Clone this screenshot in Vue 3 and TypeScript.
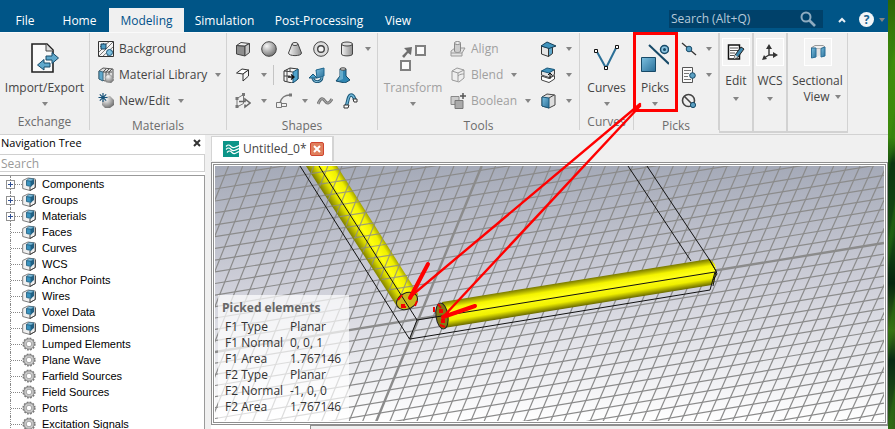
<script setup lang="ts">
import { ref } from 'vue'

interface MenuTab { label: string; active?: boolean }
interface TreeNode { label: string; icon: string; branch?: boolean }
interface GridLine { x1: number; y1: number; x2: number; y2: number; axis: boolean }

const tabs: MenuTab[] = [
  { label: 'File' },
  { label: 'Home' },
  { label: 'Modeling', active: true },
  { label: 'Simulation' },
  { label: 'Post-Processing' },
  { label: 'View' },
]

const folder = (label: string, branch = false): TreeNode => ({ label, icon: 'folder', branch })
const gear = (label: string): TreeNode => ({ label, icon: 'gear' })

const tree: TreeNode[] = [
  folder('Components', true),
  folder('Groups', true),
  folder('Materials', true),
  folder('Faces'),
  folder('Curves'),
  folder('WCS'),
  folder('Anchor Points'),
  folder('Wires'),
  folder('Voxel Data'),
  folder('Dimensions'),
  gear('Lumped Elements'),
  gear('Plane Wave'),
  gear('Farfield Sources'),
  gear('Field Sources'),
  gear('Ports'),
  gear('Excitation Signals'),
]

const picked: [string, string][] = [
  ['F1 Type', 'Planar'],
  ['F1 Normal', '0, 0, 1'],
  ['F1 Area', '1.767146'],
  ['F2 Type', 'Planar'],
  ['F2 Normal', '-1, 0, 0'],
  ['F2 Area', '1.767146'],
]

const command = ref('')
const filter = ref('')

// Ground plane seen in perspective: spacing shrinks slightly away from the axes.
const lines: GridLine[] = []
for (let n = -18; n <= 18; n++) {
  const bend = 0.028 * n * n
  lines.push({ x1: 215, y1: 352 + 11.25 * n - bend, x2: 884, y2: 243 + 11.1 * n - bend, axis: n === 0 })
}
for (let n = -22; n <= 42; n++) {
  lines.push({
    x1: 481.7 + 13.85 * n - 0.012 * n * n,
    y1: 166,
    x2: 376 + 13.6 * n - 0.015 * n * n,
    y2: 422,
    axis: n === 0,
  })
}
</script>

<template>
  <svg class="defs" aria-hidden="true">
    <defs>
      <linearGradient id="gBlue" x1="0" y1="0" x2="1" y2="1"><stop offset="0" stop-color="#7cc0e0" /><stop offset="1" stop-color="#2a6f98" /></linearGradient>
      <linearGradient id="gGrey" x1="0" y1="0" x2="1" y2="0"><stop offset="0" stop-color="#f4f4f4" /><stop offset="1" stop-color="#8d8d8d" /></linearGradient>
      <radialGradient id="gBall" cx=".35" cy=".3" r=".75"><stop offset="0" stop-color="#f6f6f6" /><stop offset="1" stop-color="#6f6f6f" /></radialGradient>
    </defs>
    <symbol id="caret" viewBox="0 0 6 4"><path d="M0 0h6L3 4z" fill="#858585" /></symbol>
    <symbol id="exchange" viewBox="0 0 28 30">
      <path d="M1 1h15l6 6v22H1z" fill="#fafafa" stroke="#222" stroke-width="1.6" /><path d="M15 1v7h7" fill="#ddd" stroke="#444" />
      <path d="M15 13h6v-3.500l6.500 5.500-6.500 5.500V17h-6z" fill="#5fa8cc" stroke="#174a68" />
      <path d="M19 20h-6v-3.500L6.500 22l6.500 5v-3h6z" fill="#5fa8cc" stroke="#174a68" />
    </symbol>
    <symbol id="background" viewBox="0 0 16 16">
      <path d="M.5.5h15v15H.5z" fill="#f4f4f4" stroke="#333" /><path d="M1 15 15 1M1 11 7 5M5 15 15 6M9 15l6-5M2 6l4-4M8 3l3-2" stroke="#777" />
      <path d="M3 3h5v5H3z" fill="#4d9cc4" stroke="#173f5a" /><circle cx="11.500" cy="11.500" r="3" fill="#7cc0e0" stroke="#1c5678" />
    </symbol>
    <symbol id="library" viewBox="0 0 16 16">
      <path d="M1 4 5 1l10 1v9l-8 3-6-2z" fill="#ddd" stroke="#555" /><path d="M1 4l4 1v9l-4-2z" fill="#5fa8cc" stroke="#3c6a82" /><path d="M5 5l3-3M8 13V5l3-3M11 12V5l3-3M5 5h9" fill="none" stroke="#555" />
      <path d="M7 10l3-3 4 2 2 4-3 3-5-1z" fill="url(#gBall)" stroke="#888" stroke-width=".5" />
    </symbol>
    <symbol id="newedit" viewBox="0 0 16 16">
      <path d="M4 8l3-4 5-1 4 4v5l-4 3H7l-3-3z" fill="url(#gBall)" /><path d="M5 0v9M.5 4.500h9M1.800 1.300l6.400 6.400M8.200 1.300 1.800 7.700" stroke="#16527a" stroke-width="1.200" />
    </symbol>
    <symbol id="box" viewBox="0 0 16 16"><path d="M1.500 4.500 10 5v10l-8.500-2z" fill="#8e8e8e" stroke="#444" /><path d="M1.500 4.500 6 1.500l8.500 1L10 5z" fill="#eee" stroke="#444" /><path d="M10 5l4.500-2.500v9L10 15z" fill="#c4c4c4" stroke="#444" /></symbol>
    <symbol id="ball" viewBox="0 0 16 16"><circle cx="8" cy="8" r="7.300" fill="url(#gBall)" stroke="#444" /></symbol>
    <symbol id="cone" viewBox="0 0 16 16"><path d="M5 3 1.500 12c0 3.500 13 3.500 13 0L11 3z" fill="url(#gGrey)" stroke="#444" /><ellipse cx="8" cy="3" rx="3" ry="1.500" fill="#eee" stroke="#444" /></symbol>
    <symbol id="torus" viewBox="0 0 16 16"><circle cx="8" cy="8" r="7.300" fill="#ddd" stroke="#444" /><circle cx="8" cy="8" r="3.300" fill="#f4f4f4" stroke="#444" stroke-width="1.400" /></symbol>
    <symbol id="cylinder" viewBox="0 0 16 16"><path d="M2.500 3v10c0 2.500 11 2.500 11 0V3z" fill="url(#gGrey)" stroke="#444" /><ellipse cx="8" cy="3" rx="5.500" ry="2" fill="#ddd" stroke="#444" /></symbol>
    <symbol id="extrude" viewBox="0 0 16 16"><path d="M1.500 6 7 2l6.500 1L8 7z" fill="#fff" stroke="#333" /><path d="M13.500 3v6L8 14V7z" fill="#f4f4f4" stroke="#333" /></symbol>
    <symbol id="cubein" viewBox="0 0 16 16"><path d="M1 4l6-3 8 1v10l-6 4-8-2z" fill="#f6f6f6" stroke="#333" /><path d="M10 5l5-3v10l-5 4z" fill="#4fa3cc" stroke="#1a5576" /><path d="M1 4l9 1M4 2.500v12M1 9h6M7 1v4" stroke="#444" fill="none" /><path d="M5 10h5M8 7.500l3 2.500-3 2.500" stroke="#111" fill="none" stroke-width="1.300" /></symbol>
    <symbol id="revolve" viewBox="0 0 16 16"><path d="M7 3l8-2v8l-7 2z" fill="url(#gBlue)" stroke="#1d658c" /><path d="M13 10c0 6-9 6-9 1" fill="none" stroke="#1a5779" stroke-width="3" /><path d="M13 10c0 6-9 6-9 1" fill="none" stroke="#8cc9e5" /><path d="M0 11l4-4 4 4z" fill="#4fa3cc" stroke="#1a5779" /></symbol>
    <symbol id="loft" viewBox="0 0 16 16"><path d="M5 2h6v7l4 4-5 3-9-2 4-5z" fill="#2f86b2" stroke="#174b68" /><path d="M8 3v9l-5 2 2-5V3z" fill="#65abcb" /><ellipse cx="8" cy="2" rx="3" ry="1.200" fill="#ddd" stroke="#444" /></symbol>
    <symbol id="plane" viewBox="0 0 16 16"><path d="M2 5.500 8.500 1.500v9L2 14z" fill="#f2f2f2" stroke="#777" /><path d="M4 8.500h6V6l5 4-5 4v-2.500" fill="none" stroke="#666" stroke-width="1.500" /><path d="M.5 4h3v3h-3zM.5 12h3v3h-3zM7 0h3v3H7z" fill="#777" /></symbol>
    <symbol id="arc" viewBox="0 0 16 16"><path d="M.5 9.500h5v5h-5zM5.500 10.500h5v3h-5z" fill="none" stroke="#777" /><path d="M4 10C5 5 9 2 14 2" fill="none" stroke="#777" stroke-width="1.500" /><path d="M13 .5h3v3h-3z" fill="#777" /></symbol>
    <symbol id="wave" viewBox="0 0 16 16"><path d="M1 11C4 4 6 5 8 8s4 3 7-2" fill="none" stroke="#777" stroke-width="3" /><path d="M1 11C4 4 6 5 8 8s4 3 7-2" fill="none" stroke="#b4b4b4" /></symbol>
    <symbol id="sweep" viewBox="0 0 16 16"><path d="M3 14C5 9 5 2 8 2s3 3 4 5" fill="none" stroke="#195879" stroke-width="3.400" /><path d="M3 14C5 9 5 2 8 2s3 3 4 5" fill="none" stroke="#72b8d9" stroke-width="1.400" /><path d="M1 12h5l-1 3H1zM10 6h4v3h-3z" fill="#fff" stroke="#333" /></symbol>
    <symbol id="transform" viewBox="0 0 28 28"><path d="M17 2h9v9h-9zM2 17h9v9H2z" fill="#fafafa" stroke="#808080" stroke-width="2" /><path d="M3 12l5-5-3-3 8-1-1 8-3-2-4 5z" fill="#6e6e6e" /></symbol>
    <symbol id="align" viewBox="0 0 16 16"><path d="M1 10l4-3h10l-3 5v3H1z" fill="#e4e4e4" stroke="#999" /><path d="M4.500 2v8c0 2 6 2 6 0V2z" fill="#ccc" stroke="#888" /><ellipse cx="7.500" cy="2" rx="3" ry="1.500" fill="#eee" stroke="#888" /><path d="M1 12h11" stroke="#999" /></symbol>
    <symbol id="blend" viewBox="0 0 16 16"><path d="M2 4l5-3 7 2v8l-5 4-7-2z" fill="#eee" stroke="#999" /><path d="M2 4l6 2v8M8 6l6-3M8 9c2-2 4-2 6-2" fill="none" stroke="#999" /></symbol>
    <symbol id="boolean" viewBox="0 0 16 16"><path d="M1 3.500h8v8H1z" fill="#ccc" stroke="#888" /><path d="M5 7.500h8v8H5z" fill="#aaa" stroke="#777" /><path d="M13 0v6M10 3h6" stroke="#555" stroke-width="1.500" /></symbol>
    <symbol id="cubetop" viewBox="0 0 16 16"><path d="M1.500 5v8l7 2.500V7z" fill="#e6e6e6" stroke="#333" /><path d="M8.500 7v8.500l4-3V6z" fill="#5fa8cc" stroke="#333" /><path d="M1 5l6-4 9 4-7 2.500z" fill="#3f93bd" stroke="#173f57" /></symbol>
    <symbol id="cubelid" viewBox="0 0 16 16"><path d="M1.500 9 9 11.500l5.500-3V12L9 15.500 1.500 13z" fill="#fff" stroke="#444" /><path d="M1.500 4v4L9 10.500l5.500-3V3z" fill="#e4e4e4" stroke="#444" /><path d="M1.500 4 7 1l7.500 1.500L9 6z" fill="#3f93bd" stroke="#1b587a" /><path d="M10 12V6M8 8l2-2 2 2" stroke="#111" fill="none" /></symbol>
    <symbol id="cubeside" viewBox="0 0 16 16"><path d="M2 4l5-3 8 1v10l-6 3-7-2z" fill="#ddd" stroke="#444" /><path d="M2 4l7 1v10l-7-2z" fill="url(#gBlue)" stroke="#1b587a" /><path d="M9 5l5-3" stroke="#444" /></symbol>
    <symbol id="curves" viewBox="0 0 28 28"><path d="M3 6l10 18L24 2" fill="none" stroke="#2b6f96" stroke-width="2" /><path d="M1.500 5.500h3v3h-3zM11.500 22.500h3v3h-3zM22.500 1.500h3v3h-3z" fill="#fff" stroke="#111" /></symbol>
    <symbol id="picks" viewBox="0 0 28 28"><path d="M.5 13.500h14v14H.5z" fill="url(#gBlue)" stroke="#174a68" /><path d="M8 1l20 19" stroke="#174a68" stroke-width="2" /><circle cx="23.500" cy="5.500" r="4" fill="#8ac2de" stroke="#174a68" stroke-width="1.500" /><circle cx="23.500" cy="5.500" r="1.500" fill="#174a68" /></symbol>
    <symbol id="pickpoint" viewBox="0 0 16 16"><path d="M1 2l14 12" stroke="#333" stroke-width="1.300" /><circle cx="8" cy="8" r="2.800" fill="#5a9fc2" stroke="#174a68" /></symbol>
    <symbol id="picklist" viewBox="0 0 16 16"><path d="M1.500.5h10v15h-10z" fill="#fafafa" stroke="#555" /><path d="M3 3.500h7M3 6.500h5M3 9.500h4M3 12.500h7" stroke="#777" /><circle cx="11.500" cy="8.500" r="2.800" fill="#5a9fc2" stroke="#174a68" /></symbol>
    <symbol id="pickclear" viewBox="0 0 16 16"><circle cx="7.500" cy="7.500" r="6" fill="none" stroke="#444" stroke-width="1.600" /><path d="M3 3l9 9" stroke="#444" stroke-width="1.600" /><circle cx="12" cy="12" r="2.600" fill="#5a9fc2" stroke="#174a68" /></symbol>
    <symbol id="edit" viewBox="0 0 18 18"><path d="M1.500 2h11v14h-11z" fill="#fff" stroke="#111" stroke-width="1.500" /><path d="M3 5h8M3 7.500h8M3 10h5M3 12.500h4" stroke="#555" /><path d="M8 12l6-8 3 2-6 8-4 2z" fill="#3f88ae" stroke="#222" /><path d="M8 12l-1 4 4-2z" fill="#ddd" /></symbol>
    <symbol id="wcs" viewBox="0 0 18 18"><path d="M8 12V4M8 12h6M8 12l-5 3" stroke="#333" stroke-width="1.400" /><path d="M8 1l3 5H5zM17 12l-5-3v6zM1 17l2-5 3 4z" fill="#333" /></symbol>
    <symbol id="section" viewBox="0 0 18 18"><path d="M2 5l4-2.500h8L16 4l-4 1.500H7z" fill="#f0f0f0" stroke="#999" /><path d="M7 5.500h5V12l-5 2z" fill="#e2e2e2" /><path d="M2.500 5H7v9l-4.500 1z" fill="url(#gBlue)" stroke="#2a6f98" /><path d="M12 5.500l4-1.500v9l-4 1z" fill="url(#gBlue)" stroke="#2a6f98" /></symbol>
    <symbol id="folder" viewBox="0 0 14 14"><path d="M.7 3.500 6 1l7.300 1v8.500L8 13.500l-7.300-2z" fill="#f0f0f0" stroke="#7c7c7c" /><path d="M13.300 3v7.500L8 13.500V10" fill="none" stroke="#444" /><path d="M4.500 3.500 9 4v5.500l-4.500-1z" fill="#3b94c0" stroke="#1b5878" stroke-width=".8" /><path d="M9 4l3-2v5L9 9.500z" fill="#205f82" /><path d="M4.500 3.500 7 1.500l5 .5-3 2z" fill="#86c6e4" stroke="#1b5878" stroke-width=".6" /></symbol>
    <symbol id="gear" viewBox="0 0 14 14"><circle cx="7" cy="7" r="5.800" fill="none" stroke="#777" stroke-width="1.600" stroke-dasharray="1.800 1.230" /><circle cx="7" cy="7" r="4.200" fill="none" stroke="#c4c4c4" stroke-width="2" /><circle cx="7" cy="7" r="5.200" fill="none" stroke="#808080" stroke-width=".8" /><circle cx="7" cy="7" r="2.800" fill="#fff" stroke="#888" stroke-width=".8" /></symbol>
  </svg>

  <div class="desktop">
    <div class="window">
      <header class="titlebar">
        <nav class="tabs">
          <button v-for="t in tabs" :key="t.label" class="tab" :class="{ active: t.active }">{{ t.label }}</button>
        </nav>
        <label class="command">
          <input v-model="command" type="text" placeholder="Search (Alt+Q)" aria-label="Search commands">
          <svg viewBox="0 0 16 16"><circle cx="6" cy="6" r="4.500" fill="none" stroke="#8eabc0" stroke-width="2" /><path d="M9.500 9.500 15 15" stroke="#8eabc0" stroke-width="2.600" /></svg>
        </label>
        <button class="chrome" aria-label="Collapse ribbon"><svg viewBox="0 0 8 6" class="chevron"><path d="M1 5l3-3 3 3" fill="none" stroke="#e8eef3" stroke-width="2" /></svg></button>
        <button class="help" aria-label="Help">?</button>
        <svg class="caret"><use href="#caret" /></svg>
      </header>

      <div class="ribbon">
        <section class="group exchange">
          <div class="body">
            <button class="big"><svg class="i28"><use href="#exchange" /></svg><span>Import/Export</span><svg class="caret"><use href="#caret" /></svg></button>
          </div>
          <h2>Exchange</h2>
        </section>

        <section class="group materials">
          <div class="body stack">
            <button class="row"><svg class="i16"><use href="#background" /></svg>Background</button>
            <button class="row"><svg class="i16"><use href="#library" /></svg>Material Library<svg class="caret"><use href="#caret" /></svg></button>
            <button class="row"><svg class="i16"><use href="#newedit" /></svg>New/Edit<svg class="caret"><use href="#caret" /></svg></button>
          </div>
          <h2>Materials</h2>
        </section>

        <section class="group shapes">
          <div class="body stack">
            <div class="strip">
              <button class="tool" aria-label="Brick"><svg class="i16"><use href="#box" /></svg></button>
              <button class="tool" aria-label="Sphere"><svg class="i16"><use href="#ball" /></svg></button>
              <button class="tool" aria-label="Cone"><svg class="i16"><use href="#cone" /></svg></button>
              <button class="tool" aria-label="Torus"><svg class="i16"><use href="#torus" /></svg></button>
              <button class="tool" aria-label="Cylinder"><svg class="i16"><use href="#cylinder" /></svg></button>
              <button class="drop" aria-label="More shapes"><svg class="caret"><use href="#caret" /></svg></button>
            </div>
            <div class="strip">
              <button class="tool" aria-label="Extrude"><svg class="i16"><use href="#extrude" /></svg></button>
              <button class="drop" aria-label="Extrude options"><svg class="caret"><use href="#caret" /></svg></button>
              <i class="divider"></i>
              <button class="tool" aria-label="Extrude face"><svg class="i16"><use href="#cubein" /></svg></button>
              <button class="tool" aria-label="Rotate face"><svg class="i16"><use href="#revolve" /></svg></button>
              <button class="tool" aria-label="Loft"><svg class="i16"><use href="#loft" /></svg></button>
            </div>
            <div class="strip">
              <button class="tool" aria-label="Bond wire"><svg class="i16"><use href="#plane" /></svg></button>
              <button class="drop" aria-label="Bond wire options"><svg class="caret"><use href="#caret" /></svg></button>
              <button class="tool" aria-label="Trace"><svg class="i16"><use href="#arc" /></svg></button>
              <button class="drop" aria-label="Trace options"><svg class="caret"><use href="#caret" /></svg></button>
              <button class="tool" aria-label="Spline"><svg class="i16"><use href="#wave" /></svg></button>
              <button class="tool" aria-label="Sweep"><svg class="i16"><use href="#sweep" /></svg></button>
            </div>
          </div>
          <h2>Shapes</h2>
        </section>

        <section class="group tools">
          <div class="body">
            <button class="big off"><svg class="i28"><use href="#transform" /></svg><span>Transform</span><svg class="caret"><use href="#caret" /></svg></button>
            <div class="stack labelled">
              <button class="row off"><svg class="i16"><use href="#align" /></svg>Align</button>
              <button class="row off"><svg class="i16"><use href="#blend" /></svg>Blend<svg class="caret"><use href="#caret" /></svg></button>
              <button class="row off"><svg class="i16"><use href="#boolean" /></svg>Boolean<svg class="caret"><use href="#caret" /></svg></button>
            </div>
            <div class="stack">
              <div v-for="n in ['cubetop', 'cubelid', 'cubeside']" :key="n" class="strip">
                <button class="tool" :aria-label="n"><svg class="i16"><use :href="'#' + n" /></svg></button>
                <button class="drop" :aria-label="n + ' options'"><svg class="caret"><use href="#caret" /></svg></button>
              </div>
            </div>
          </div>
          <h2>Tools</h2>
        </section>

        <section class="group curves">
          <div class="body">
            <button class="big"><svg class="i28"><use href="#curves" /></svg><span>Curves</span><svg class="caret"><use href="#caret" /></svg></button>
          </div>
          <h2>Curves</h2>
        </section>

        <section class="group picks">
          <div class="body">
            <button class="big"><svg class="i28"><use href="#picks" /></svg><span>Picks</span><svg class="caret"><use href="#caret" /></svg></button>
            <div class="stack">
              <div class="strip"><button class="tool" aria-label="Pick point"><svg class="i16"><use href="#pickpoint" /></svg></button><button class="drop" aria-label="Pick point options"><svg class="caret"><use href="#caret" /></svg></button></div>
              <div class="strip"><button class="tool" aria-label="Pick list"><svg class="i16"><use href="#picklist" /></svg></button><button class="drop" aria-label="Pick list options"><svg class="caret"><use href="#caret" /></svg></button></div>
              <div class="strip"><button class="tool" aria-label="Clear picks"><svg class="i16"><use href="#pickclear" /></svg></button></div>
            </div>
          </div>
          <h2>Picks</h2>
        </section>

        <button class="panel"><span class="tile"><svg class="i18"><use href="#edit" /></svg></span><span>Edit</span><svg class="caret"><use href="#caret" /></svg></button>
        <button class="panel"><span class="tile"><svg class="i18"><use href="#wcs" /></svg></span><span>WCS</span><svg class="caret"><use href="#caret" /></svg></button>
        <button class="panel wide"><span class="tile"><svg class="i18"><use href="#section" /></svg></span><span>Sectional</span><span class="second">View <svg class="caret"><use href="#caret" /></svg></span></button>
      </div>

      <main class="work">
        <aside class="nav">
          <div class="nav-head">
            <h1>Navigation Tree</h1>
            <button aria-label="Close navigation tree"><svg viewBox="0 0 8 8"><path d="M1 1l6 6M7 1 1 7" stroke="#333" stroke-width="2" /></svg></button>
          </div>
          <input v-model="filter" class="filter" type="text" placeholder="Search" aria-label="Search tree">
          <ul class="tree">
            <li v-for="node in tree" :key="node.label">
              <span class="joint"><button v-if="node.branch" class="plus" :aria-label="'Expand ' + node.label"></button></span>
              <svg class="i14"><use :href="'#' + node.icon" /></svg>
              <span>{{ node.label }}</span>
            </li>
          </ul>
        </aside>

        <section class="document">
          <div class="doc-tabs">
            <div class="doc-tab">
              <svg class="i16" viewBox="0 0 16 16"><path d="M0 0h16v16H0z" fill="#0b9488" /><path d="M3 5.500c2-2 3-2 5 0s4 1 8-1M3 8.500c2-2 3-2 5 0s4 1 8-1M4 11.500c2-2 3-2 5 0s3 1 7-1" fill="none" stroke="#fff" stroke-width="1.200" /></svg>
              <span>Untitled_0*</span>
              <button aria-label="Close document"><svg viewBox="0 0 8 8"><path d="M1 1l6 6M7 1 1 7" stroke="#fff" stroke-width="2" /></svg></button>
            </div>
          </div>

          <div class="frame">
            <div class="viewport">
              <svg class="scene" viewBox="215 166 669 256" preserveAspectRatio="xMinYMin slice" role="img" aria-label="3D model view">
                <defs>
                  <linearGradient id="sky" x1="0" y1="0" x2="0" y2="1"><stop offset="0" stop-color="#a5aab8" /><stop offset=".45" stop-color="#cdced8" /><stop offset="1" stop-color="#ffffff" /></linearGradient>
                  <linearGradient id="rodA" gradientUnits="userSpaceOnUse" x1="338" y1="218" x2="363" y2="202"><stop offset="0" stop-color="#6e6e00" /><stop offset=".3" stop-color="#d8d800" /><stop offset=".5" stop-color="#ffff10" /><stop offset=".75" stop-color="#f0f000" /><stop offset="1" stop-color="#777700" /></linearGradient>
                  <linearGradient id="rodB" gradientUnits="userSpaceOnUse" x1="575" y1="281" x2="579" y2="306"><stop offset="0" stop-color="#808000" /><stop offset=".25" stop-color="#f4f400" /><stop offset=".45" stop-color="#ffff18" /><stop offset=".75" stop-color="#f0f000" /><stop offset="1" stop-color="#6e6e00" /></linearGradient>
                </defs>
                <rect x="215" y="166" width="669" height="256" fill="url(#sky)" />
                <g id="ground">
                  <line v-for="(l, i) in lines" :key="i" :x1="l.x1" :y1="l.y1" :x2="l.x2" :y2="l.y2" stroke="#8b8b8b" :stroke-width="l.axis ? 2.4 : 1.2" />
                </g>
                <path d="M306 166h31l81 128q-2 12-20 14z" fill="url(#rodA)" />
                <clipPath id="clipA"><path d="M306 166h31l81 128-20 10z" /></clipPath>
                <g clip-path="url(#clipA)" opacity=".8"><use href="#ground" /></g>
                <path d="M442 302 709 259q7 3 7 12t-4 14L444 328z" fill="url(#rodB)" />
                <ellipse cx="407" cy="301" rx="11" ry="8" transform="rotate(-25 407 301)" fill="#c8b81c" stroke="#222" />
                <ellipse cx="442" cy="316" rx="6" ry="13" transform="rotate(-8 442 316)" fill="#817a14" stroke="#222" />
                <path d="M300 166 409.500 339 417 320 319 166M417 320l298-48-5 18-300 49M628 166l63 95M647 166l62 93 7 12M709 259l7 12-3 15M716 271l1 3-4 6" fill="none" stroke="#111" />
                <path d="M398 300l4-5M415 306l2-5M401 307h5M434 312v-5M438 304l3 4M448 312v5M440 325l5 2" stroke="#f20000" stroke-width="2" />
                <path d="M401 304h4v4h-4zM439 309h4v4h-4zM441 319h4v4h-4z" fill="#f20000" />
              </svg>
              <div class="picked">
                <h3>Picked elements</h3>
                <dl>
                  <template v-for="[key, value] in picked" :key="key"><dt>{{ key }}</dt><dd>{{ value }}</dd></template>
                </dl>
              </div>
            </div>
          </div>
          <div class="below"><div class="below-panel"></div></div>
        </section>
      </main>
    </div>
    <div class="wallpaper"></div>

    <svg class="markup" viewBox="0 0 895 429" aria-hidden="true">
      <g fill="none" stroke="#ff0000" stroke-linecap="round">
        <path d="M634.500 33.500h42v77h-42z" stroke-width="3" stroke-linecap="square" />
        <path d="M640 104 410 297M640 106 443 317" stroke-width="2.400" />
        <path d="M428 264 410 298M475 306l-32 11" stroke-width="4" />
      </g>
    </svg>
  </div>
</template>

<style>
body { margin: 0; overflow: hidden; }
</style>

<style scoped>
* { box-sizing: border-box; }
h1, h2, h3, ul, dl, dd { margin: 0; padding: 0; }
button { margin: 0; padding: 0; border: 0; background: none; font: inherit; color: inherit; }
input { font: inherit; min-width: 0; border: 0; outline: 0; padding: 0; }
svg { display: block; flex: none; }
.defs { position: absolute; width: 0; height: 0; }

.desktop { position: relative; display: flex; height: 100vh; overflow: hidden; font: 12px/16px "Open Sans", "Noto Sans", sans-serif; color: #444; }
.window { flex: 1; min-width: 0; display: flex; flex-direction: column; background: #f0f0f0; }
.wallpaper { width: 7px; background: repeating-linear-gradient(100deg, #0000 0 9px, #2f7a1066 11px 13px, #0000 16px), linear-gradient(#2c6507, #3f8d0b 14%, #3c8a0c 32%, #0b3510 38%, #164d12 55%, #05250e 66%, #3b6f14 77%, #082a12 84%, #326516); }
.i14 { width: 14px; height: 14px; }
.i16 { width: 16px; height: 16px; }
.i18 { width: 18px; height: 18px; }
.i28 { width: 28px; height: 30px; }
.caret { width: 6px; height: 4px; }

.titlebar { display: flex; align-items: flex-end; height: 32px; background: #005587; color: #fff; }
.tabs { display: grid; grid-template-columns: 50px 59px 75px 81px 108px 50px; flex: 1; }
.tab { height: 24px; padding-top: 2px; text-align: center; white-space: nowrap; }
.tab.active { background: #f0f0f0; color: #00508a; }
.command { display: flex; align-items: center; width: 154px; height: 18px; margin: 0 15px 4px 0; padding: 0 7px 0 2px; background: #00416a; }
.command input { flex: 1; background: none; color: #fff; }
.command input::placeholder { color: #b5cad9; opacity: 1; }
.command svg { width: 16px; height: 16px; }
.chrome { height: 24px; margin-right: 13px; }
.chevron { width: 8px; height: 6px; }
.help { width: 15px; height: 15px; margin: 0 5px 5px 0; border-radius: 50%; background: #f2f5f7; color: #17638f; font-weight: 700; line-height: 15px; }
.titlebar > .caret { margin: 0 3px 10px 0; }

.ribbon { display: flex; height: 103px; border-top: 1px solid #fafafa; border-bottom: 1px solid #d2d2d2; }
.group { display: flex; flex-direction: column; flex: none; height: 97px; padding-top: 3px; border-right: 1px solid #d2d2d2; }
.group h2 { font-size: 12px; font-weight: 400; line-height: 16px; text-align: center; color: #6c6c6c; padding-top: 4px; }
.body { display: flex; height: 78px; }
.stack { display: flex; flex-direction: column; }
.exchange { width: 90px; }
.materials { width: 137px; }
.materials .body { padding-left: 8px; }
.shapes { width: 151px; }
.shapes .body { padding-left: 3px; }
.tools { width: 202px; }
.tools .big { width: 70px; flex: none; }
.labelled { width: 87px; }
.curves { width: 54px; }
.picks { width: 85px; }
.picks .big { width: 42px; flex: none; }
.picks .tool { width: 25px; }
.big { display: flex; flex-direction: column; align-items: center; flex: 1; padding-top: 7px; white-space: nowrap; }
.big span { line-height: 18px; margin: 6px 0 5px; }
.row { display: flex; align-items: center; height: 26px; gap: 5px; white-space: nowrap; }
.labelled .row { padding-left: 2px; }
.row .caret { margin-left: 3px; }
.off { color: #a0a0a0; }
.strip { display: flex; align-items: center; height: 26px; }
.tool { display: grid; place-items: center; width: 26px; height: 26px; }
.drop { display: grid; place-items: center; width: 15px; height: 26px; }
.divider { width: 1px; height: 20px; margin: 0 4px 0 2px; background: #c4c4c4; }
.panel { display: flex; flex-direction: column; align-items: center; flex: none; width: 34px; height: 100px; padding-top: 5px; border: 2px solid #d2d2d2; border-width: 0 1px 2px; line-height: 16px; }
.panel.wide { width: 61px; }
.tile { display: grid; place-items: center; width: 28px; height: 28px; margin-bottom: 7px; border: 1px solid #fff; background: #f4f4f4; }
.panel > .caret { margin-top: 8px; }
.second { display: flex; align-items: center; gap: 5px; padding-left: 9px; }

.work { display: flex; flex: 1; min-height: 0; }
.nav { display: flex; flex-direction: column; flex: none; width: 205px; background: #fff; }
.nav-head { display: flex; align-items: center; justify-content: space-between; height: 16px; padding: 0 4px 0 1px; }
.nav-head h1 { font-size: 11px; font-weight: 500; color: #000; }
.nav-head svg { width: 8px; height: 8px; }
.filter { flex: none; height: 18px; margin-top: 3px; padding-left: 1px; border: 1px solid #d0d0d0; border-left: 0; }
.filter::placeholder { color: #999; opacity: 1; }
.tree { flex: 1; min-height: 0; overflow: hidden; margin-top: 3px; border: solid #9a9a9a; border-width: 1px 1px 0 0; list-style: none; font: 11px/16px "Liberation Sans", Arial, sans-serif; color: #000; }
.tree li { display: flex; align-items: center; height: 16px; }
.tree li > span:last-child { margin-left: 6px; }
.joint { position: relative; display: flex; align-items: center; width: 12px; height: 16px; margin-left: 10px; border-left: 1px dotted #888; background: linear-gradient(90deg, #888 50%, transparent 50%) 0 8px / 2px 1px repeat-x; }
.plus { position: absolute; left: -5px; top: 4px; width: 9px; height: 9px; border: 1px solid #919191; background: linear-gradient(#2f4f94, #2f4f94) center / 5px 1px no-repeat, linear-gradient(#2f4f94, #2f4f94) center / 1px 5px no-repeat, #fff; }

.document { display: flex; flex-direction: column; flex: 1; min-width: 0; padding-left: 6px; }
.doc-tabs { display: flex; height: 27px; padding-top: 1px; }
.doc-tab { display: flex; align-items: center; height: 25px; padding: 0 8px 0 11px; border: 1px solid #d4d4d4; border-width: 1px 2px 0 1px; background: #fff; }
.doc-tab span { margin: 0 3px 0 4px; }
.doc-tab button { display: grid; place-items: center; width: 14px; height: 14px; border: 1px solid #cf4530; border-radius: 2px; background: #e07f5c; }
.doc-tab button svg { width: 8px; height: 8px; }
.frame { flex: 1; min-height: 0; padding: 1px; border: 1px solid #8f8f8f; background: #fff; }
.viewport { position: relative; height: 100%; border: 1px solid #8f8f8f; padding: 1px; overflow: hidden; }
.scene { width: 100%; height: 100%; }
.picked { position: absolute; left: 4px; bottom: 1px; width: 131px; height: 126px; padding: 4px 4px 0; background: #ffffffb3; color: #333; }
.picked h3 { font-size: 12px; line-height: 18px; font-weight: 700; color: #666; }
.picked dl { display: grid; grid-template-columns: 65px 1fr; padding: 2px 0 0 3px; white-space: nowrap; }
.below { height: 4px; padding-left: 99px; background: #fff; }
.below-panel { height: 4px; border: 1px solid #8f8f8f; border-width: 1px 0 0 1px; background: #f0f0f0; }

.markup { position: absolute; left: 0; top: 0; width: 895px; height: 429px; pointer-events: none; }
</style>
